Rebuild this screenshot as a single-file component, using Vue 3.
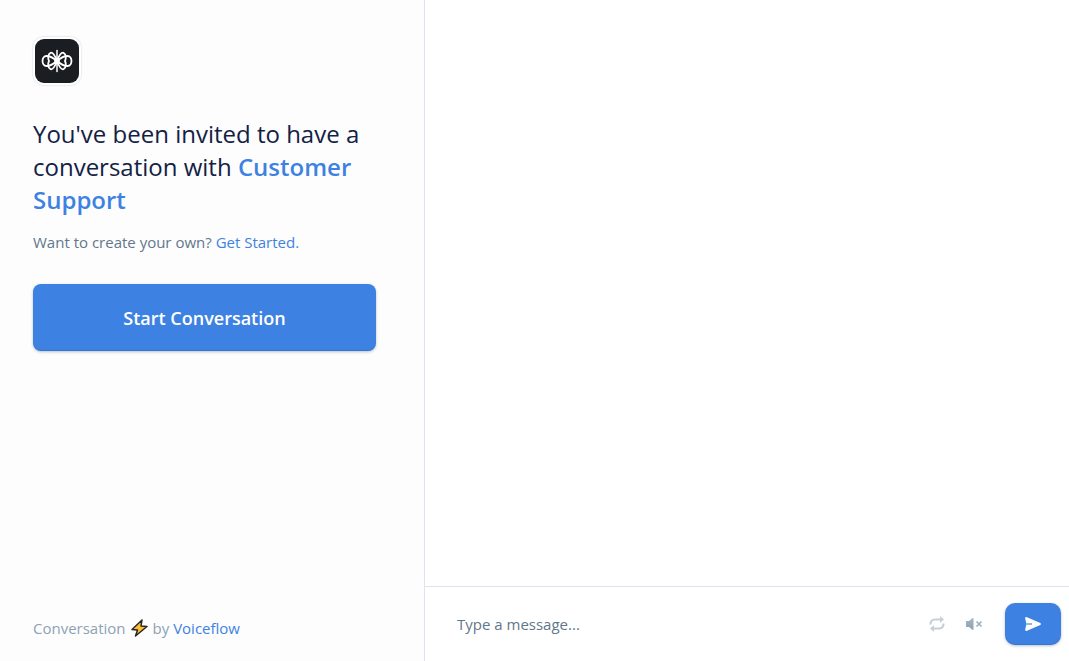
<script setup>
import { ref } from 'vue'

const message = ref('')
</script>

<template>
  <div class="page">
    <aside class="intro">
      <div class="logo">
        <svg viewBox="0 0 44 44" fill="none" stroke="#fff" stroke-width="1.8" stroke-linecap="round" aria-hidden="true">
          <path d="M22 11.500v21" stroke-width="1.500" />
          <path d="M22 22C20.500 18 18 13 15.500 13.800C12.500 15 13 20 14 22C13 24 12.500 29 15.500 30.200C18 31 20.500 26 22 22Z" />
          <path d="M22 22C23.500 18 26 13 28.500 13.800C31.500 15 31 20 30 22C31 24 31.500 29 28.500 30.200C26 31 23.500 26 22 22Z" />
          <path d="M22 22C18 18.500 14 17 11.500 17C6.200 17 6.200 27 11.500 27C14 27 18 25.500 22 22Z" />
          <path d="M22 22C26 18.500 30 17 32.500 17C37.800 17 37.800 27 32.500 27C30 27 26 25.500 22 22Z" />
          <circle cx="22" cy="22" r="2" fill="#fff" />
        </svg>
      </div>
      <h1>You've been invited to have a conversation with <strong>Customer Support</strong></h1>
      <p class="create">Want to create your own? <a href="#">Get Started.</a></p>
      <button class="start" type="button">Start Conversation</button>
      <footer>
        <span>Conversation</span>
        <svg class="bolt" viewBox="0 0 18 18" aria-hidden="true">
          <path d="M11.500 1L1.500 10.500L7 11L5 17L16.500 7.500L10.500 7Z" fill="#fdbf2d" stroke="#27272b" stroke-width="1.500" stroke-linejoin="round" />
        </svg>
        <span>by <a href="#">Voiceflow</a></span>
      </footer>
    </aside>

    <main class="chat">
      <div class="messages"></div>
      <form class="composer" @submit.prevent>
        <input v-model="message" type="text" placeholder="Type a message..." aria-label="Message" />
        <button class="tool reset" type="button" aria-label="Restart conversation">
          <svg viewBox="0 0 16 16" fill="none" stroke="#c5d0da" stroke-width="2.200" aria-hidden="true">
            <path d="M1.500 8.500C1.500 5 3 3.500 6 3.500H12M14.500 7.500C14.500 11 13 12.500 10 12.500H4" />
            <path d="M11 0L15 3.500L11 7ZM5 9L1 12.500L5 16Z" fill="#c5d0da" stroke="none" />
          </svg>
        </button>
        <button class="tool" type="button" aria-label="Unmute">
          <svg viewBox="0 0 18 16" aria-hidden="true">
            <defs>
              <linearGradient id="speaker" x1="0" y1="0" x2="0" y2="1">
                <stop stop-color="#a5b5c3" />
                <stop offset="1" stop-color="#8da2b5" />
              </linearGradient>
            </defs>
            <path d="M1.500 5H4L7.400 2.200Q8.500 1.500 8.500 3V13Q8.500 14.500 7.400 13.800L4 11H1.500Q1 11 1 10.500V5.500Q1 5 1.500 5Z" fill="url(#speaker)" />
            <path d="M11.500 5.500L16.500 10.500M16.500 5.500L11.500 10.500" stroke="#a0b1bf" stroke-width="1.700" />
          </svg>
        </button>
        <button class="send" type="submit" aria-label="Send">
          <svg viewBox="0 0 18 16" aria-hidden="true">
            <path d="M3 1.200L16.300 7Q17.800 8 16.300 9L3 14.800Q1 15.500 1.200 13.500L2.200 9H8V7H2.200L1.200 2.500Q1 .5 3 1.200Z" fill="#fff" />
            <path d="M2 7H8V9H2Z" fill="#8fb7ee" />
          </svg>
        </button>
      </form>
    </main>
  </div>
</template>

<style>
body {
  margin: 0;
}
</style>

<style scoped>
.page,
.page * {
  box-sizing: border-box;
}

.page {
  display: flex;
  min-height: 100vh;
  background: #fff;
  color: #132144;
  font: 15px/22px "Open Sans", sans-serif;
}

.page svg {
  display: block;
}

a {
  color: #3d82e2;
  text-decoration: none;
}

button {
  padding: 0;
  border: 0;
  background: none;
  font: inherit;
  cursor: pointer;
}

.intro {
  display: flex;
  flex: 0 0 425px;
  flex-direction: column;
  padding: 37px 48px 22px 33px;
  border-right: 1px solid #dfe3ed;
  background: #fdfdfd;
}

.logo {
  width: 48px;
  height: 48px;
  padding: 2px;
  border-radius: 11px;
  background: #fff;
  box-shadow: 0 0 1px 1px rgba(17, 49, 96, 0.08);
}

.logo svg {
  width: 44px;
  height: 44px;
  border-radius: 9px;
  background: #1a1e23;
}

h1 {
  margin: 32px 0 0;
  font-size: 24px;
  font-weight: 400;
  line-height: 33px;
}

h1 strong {
  color: #3d82e2;
  font-weight: 600;
}

.create {
  margin: 15px 0 0;
  color: #62778c;
}

.start {
  height: 67px;
  margin-top: 31px;
  border-radius: 8px;
  background: #3d82e2;
  box-shadow: 0 1px 3px rgba(17, 49, 96, 0.3), inset 0 -1px 1px rgba(17, 49, 96, 0.15);
  color: #fff;
  font-size: 18px;
  font-weight: 600;
}

footer {
  display: flex;
  align-items: center;
  gap: 4px;
  margin-top: auto;
  color: #8da2b5;
}

.bolt {
  width: 19px;
  height: 18px;
}

.chat {
  display: flex;
  flex: 1;
  flex-direction: column;
  min-width: 0;
}

.messages {
  flex: 1;
}

.composer {
  display: flex;
  align-items: center;
  padding: 16px 8px 16px 32px;
  border-top: 1px solid #dfe3ed;
}

input {
  flex: 1;
  min-width: 0;
  padding: 0;
  border: 0;
  outline: 0;
  background: none;
  color: #132144;
  font: inherit;
}

input::placeholder {
  color: #62778c;
  opacity: 1;
}

.tool svg {
  width: 18px;
  height: 16px;
}

.reset {
  margin-right: 19px;
}

.send {
  display: grid;
  place-items: center;
  width: 56px;
  height: 42px;
  margin-left: 22px;
  border-radius: 10px;
  background: #3d82e2;
  box-shadow: 0 1px 3px rgba(17, 49, 96, 0.3), inset 0 -1px 1px rgba(17, 49, 96, 0.15);
}

.send svg {
  width: 18px;
  height: 16px;
}
</style>
